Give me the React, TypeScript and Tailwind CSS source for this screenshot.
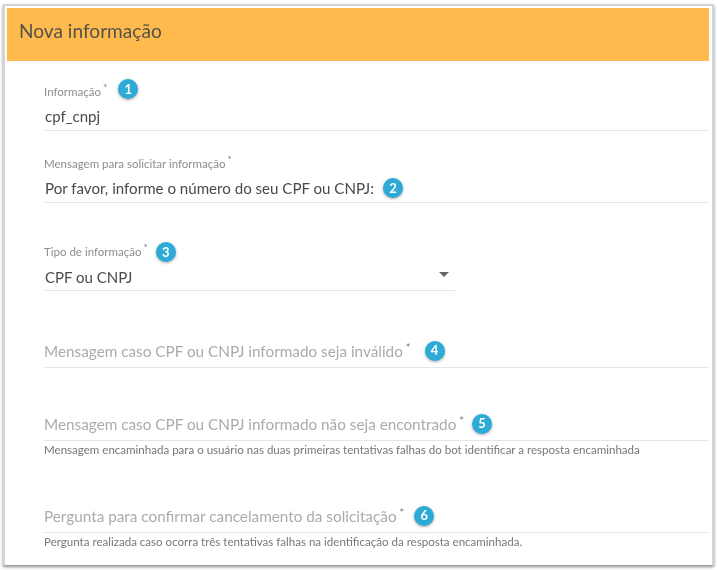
const font = { fontFamily: '"Lato", "Noto Sans", sans-serif' };

function Badge({ n }: { n: number }) {
  return (
    <span className="inline-flex h-[20px] w-[20px] shrink-0 items-center justify-center rounded-full bg-[#2eaad6] text-[13px] font-bold leading-none text-white shadow-[0_1px_3px_rgba(0,0,0,0.35)]">
      {n}
    </span>
  );
}

function Asterisk() {
  return <sup className="ml-[2px] text-[10px] text-[#777777]">*</sup>;
}

function Empty({ label, n, h, gap, pb }: { label: string; n: number; h: string; gap: string; pb: string }) {
  return (
    <div className={`${h} ${pb} flex w-full items-end border-b border-[#e6e6e6]`}>
      <span className="text-[15.3px] leading-[20px] text-[#ababab]">
        {label}
        <sup className="ml-[3px] text-[11px] text-[#777777]">*</sup>
      </span>
      <span className={gap}>
        <Badge n={n} />
      </span>
    </div>
  );
}

export default function App() {
  return (
    <div className="h-[570px] w-[717px] bg-white pb-[5px] pl-[3px] pr-[3px] pt-[4px] blur-[0.4px]" style={font}>
      <div className="h-full border-l-2 border-r-2 border-t-2 border-[#d4d4d4] bg-white pl-[2px] pr-[3px] pt-[2px] shadow-[0_2px_3px_rgba(0,0,0,0.45)]">
        <div className="flex h-[53px] items-center bg-[#ffba4d] pb-[6px] pl-[12px] text-[19.1px] text-[#55524a]">Nova informação</div>
        <div className="pl-[37px]">
          <div className="flex h-[70px] w-full flex-col justify-end border-b border-[#e6e6e6]">
            <div className="mb-[4px] flex h-[20px] items-center gap-[11px]">
              <span className="pt-[5px] text-[11.5px] leading-[14px] text-[#8d8d8d]">
                Informação
                <Asterisk />
              </span>
              <Badge n={1} />
            </div>
            <div className="flex h-[27px] items-center pb-[1px] pl-[1px] text-[15px] text-[#4a4a4a]">cpf_cnpj</div>
          </div>
          <div className="flex h-[72px] w-full flex-col justify-end border-b border-[#e6e6e6]">
            <span className="mb-[4px] text-[11.5px] leading-[14px] text-[#8d8d8d]">
              Mensagem para solicitar informação
              <Asterisk />
            </span>
            <div className="flex h-[27px] items-center gap-[9px] pb-[1px] pl-[1px] text-[15.1px] text-[#4a4a4a]">
              Por favor, informe o número do seu CPF ou CNPJ:
              <Badge n={2} />
            </div>
          </div>
          <div className="flex h-[88px] w-[411px] flex-col justify-end border-b border-[#e6e6e6]">
            <div className="mb-[4px] flex h-[20px] items-center gap-[8px]">
              <span className="text-[11.5px] leading-[14px] text-[#8d8d8d]">
                Tipo de informação
                <Asterisk />
              </span>
              <Badge n={3} />
            </div>
            <div className="flex h-[24px] items-center justify-between pb-[1px] pl-[1px] pr-[6px] text-[15px] text-[#4a4a4a]">
              <span>CPF ou CNPJ</span>
              <span className="mb-[6px] h-0 w-0 border-x-[5px] border-t-[5px] border-x-transparent border-t-[#666666]" />
            </div>
          </div>
          <Empty label="Mensagem caso CPF ou CNPJ informado seja inválido" n={4} h="h-[77px]" gap="ml-[14px]" pb="pb-[6px]" />
          <Empty label="Mensagem caso CPF ou CNPJ informado não seja encontrado" n={5} h="h-[73px]" gap="ml-[8px]" pb="pb-[6px]" />
          <p className="pt-[2px] text-[11.55px] leading-[14px] text-[#777777]">
            Mensagem encaminhada para o usuário nas duas primeiras tentativas falhas do bot identificar a resposta encaminhada
          </p>
          <Empty label="Pergunta para confirmar cancelamento da solicitação" n={6} h="h-[76px]" gap="ml-[10px]" pb="pb-[6px]" />
          <p className="pt-[2px] text-[11.55px] leading-[14px] text-[#777777]">
            Pergunta realizada caso ocorra três tentativas falhas na identificação da resposta encaminhada.
          </p>
        </div>
      </div>
    </div>
  );
}
